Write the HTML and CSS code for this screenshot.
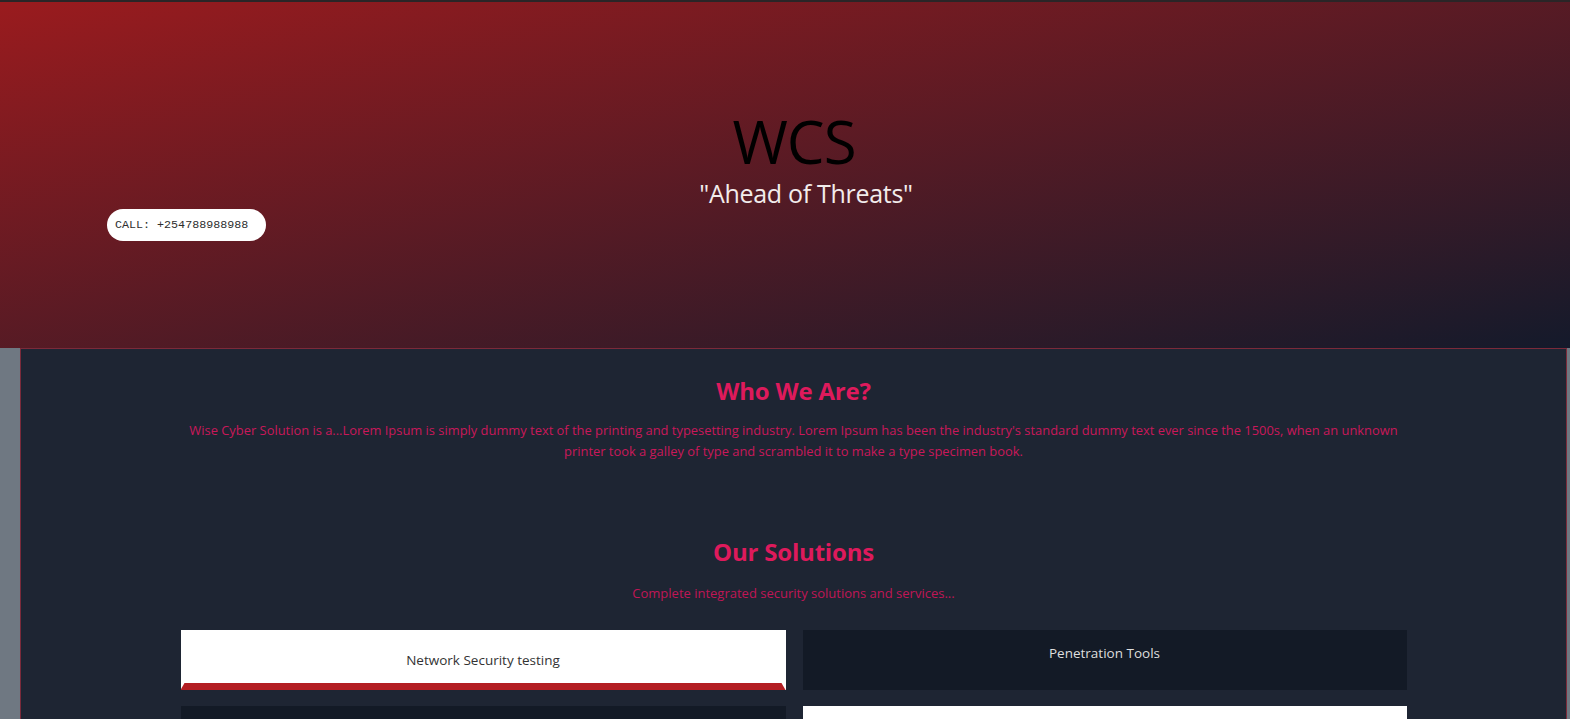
FILE: index.html
```html
<!DOCTYPE html>
<html lang="en">
<head>
<meta charset="utf-8">
<title>WCS - Wise Cyber Solution</title>
<link rel="stylesheet" href="styles.css">
</head>
<body>
<div class="topbar"></div>
<header class="hero">
  <h1 class="hero-title">WCS</h1>
  <p class="hero-tagline">"Ahead of Threats"</p>
  <a class="call-btn" href="#">CALL: +254788988988</a>
</header>
<div class="page">
  <main class="main">
    <section class="about">
      <h2 class="section-title">Who We Are?</h2>
      <p class="about-text">Wise Cyber Solution is a...Lorem Ipsum is simply dummy text of the printing and typesetting industry. Lorem Ipsum has been the industry's standard dummy text ever since the 1500s, when an unknown printer took a galley of type and scrambled it to make a type specimen book.</p>
    </section>
    <section class="solutions">
      <h2 class="section-title">Our Solutions</h2>
      <p class="solutions-sub">Complete integrated security solutions and services...</p>
      <div class="cards">
        <div class="card card-light card-active"><span class="card-label">Network Security testing</span></div>
        <div class="card card-dark"><span class="card-label">Penetration Tools</span></div>
        <div class="card card-dark"><span class="card-label">Vulnerability Assessment</span></div>
        <div class="card card-light"><span class="card-label">Security Consulting</span></div>
      </div>
    </section>
  </main>
</div>
</body>
</html>
```
FILE: styles.css
```css
* { box-sizing: border-box; }
html, body { margin: 0; padding: 0; }
body {
  background: #6f7882;
  font-family: "Open Sans", "Noto Sans", sans-serif;
  overflow: hidden;
}
.topbar {
  height: 2px;
  background: #2a2527;
}
.hero {
  height: 346px;
  background: linear-gradient(to bottom right, #9a1b1e, #141a2b);
  display: flex;
  flex-direction: column;
  align-items: center;
  padding-top: 109px;
}
.hero-title {
  margin: 0 0 0 18px;
  font-weight: 400;
  font-size: 60px;
  line-height: 60px;
  color: #000;
  letter-spacing: -1px;
}
.hero-tagline {
  margin: 7px 0 0 42px;
  font-size: 25px;
  line-height: 30px;
  color: #f2ecec;
  letter-spacing: -0.3px;
}
.call-btn {
  align-self: flex-start;
  margin: 1px 0 0 107px;
  width: 159px;
  height: 32px;
  border-radius: 16px;
  background: #fff;
  display: flex;
  align-items: center;
  padding-left: 8px;
  font-family: "Liberation Mono", monospace;
  font-size: 11.7px;
  color: #2e2e2e;
  text-decoration: none;
}
.page {
  display: flex;
  padding: 0 3px 0 20px;
}
.main {
  flex: 1;
  background: #1e2533;
  border: 1px solid #7b2a3a;
  border-bottom: none;
  padding-top: 24px;
  height: 380px;
}
.section-title {
  margin: 0;
  text-align: center;
  color: #de1a5c;
  font-size: 24px;
  line-height: 36px;
  font-weight: 700;
  letter-spacing: -0.2px;
}
.about-text {
  width: 1226px;
  margin: 11px auto 0;
  text-align: center;
  color: #c9185a;
  font-size: 12.9px;
  line-height: 21px;
}
.solutions {
  margin-top: 72px;
}
.solutions-sub {
  margin: 14px 0 0;
  text-align: center;
  color: #c01656;
  font-size: 13px;
  line-height: 18px;
}
.cards {
  width: 1226px;
  margin: 28px auto 0;
  display: grid;
  grid-template-columns: 605px 604px;
  column-gap: 17px;
  row-gap: 16px;
}
.card {
  height: 60px;
  display: flex;
  flex-direction: column;
  align-items: center;
  padding-top: 15px;
}
.card-label {
  font-size: 13.5px;
  line-height: 16px;
}
.card-light {
  background: #fff;
  color: #333;
}
.card-dark {
  background: #131a26;
  color: #dedede;
}
.card-active {
  padding-top: 22px;
}
.card-active::after {
  content: "";
  margin-top: auto;
  align-self: stretch;
  height: 7px;
  background: #b31e23;
  clip-path: polygon(4px 0, calc(100% - 4px) 0, 100% 100%, 0 100%);
}
```
